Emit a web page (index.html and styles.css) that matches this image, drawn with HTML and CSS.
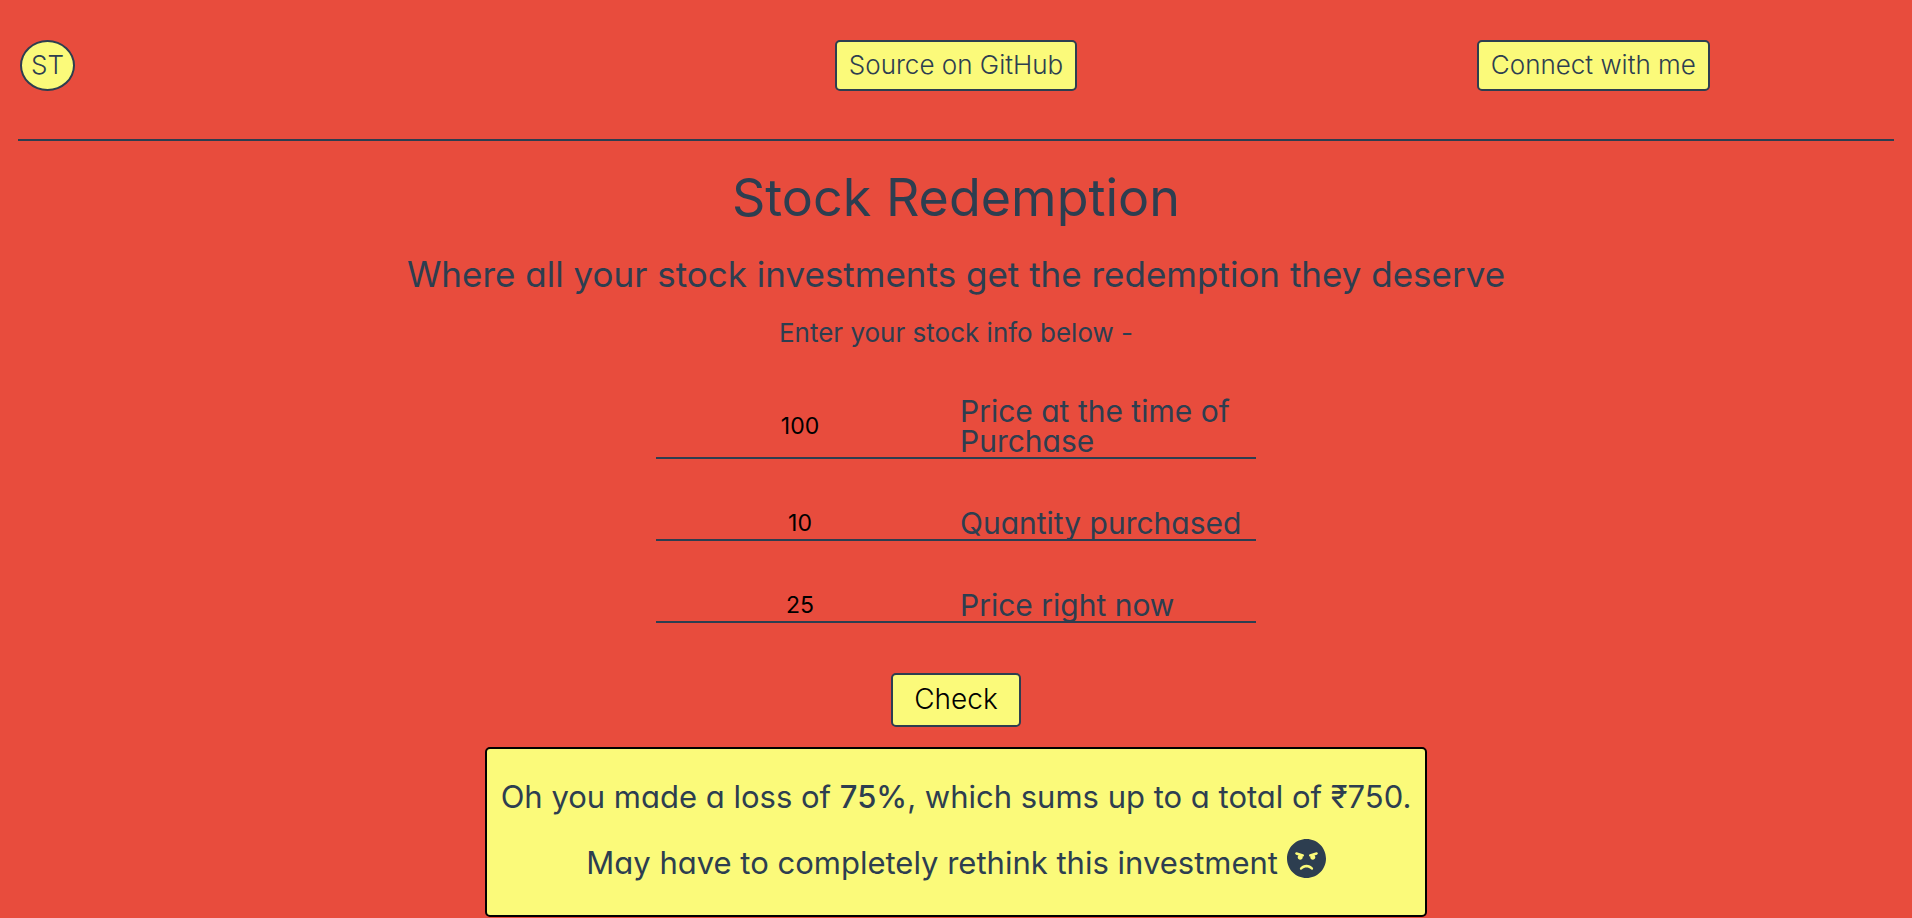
FILE: index.html
```html
<!DOCTYPE html>
<html lang="en">
<head>
  <meta charset="utf-8">
  <meta name="viewport" content="width=device-width, initial-scale=1">
  <title>Stock Redemption</title>
  <link rel="stylesheet" href="styles.css">
</head>
<body>
  <header class="nav">
    <a class="pill logo" href="#">ST</a>
    <a class="pill" href="#">Source on GitHub</a>
    <a class="pill" href="#">Connect with me</a>
  </header>
  <hr class="rule">
  <main class="page">
    <h1 class="title">Stock Redemption</h1>
    <h2 class="tagline">Where all your stock investments get the redemption they deserve</h2>
    <p class="hint">Enter your stock info below -</p>
    <form class="form">
      <div class="field">
        <input class="value" id="buy" type="text" inputmode="numeric" value="100">
        <label for="buy">Price at the time of Purchase</label>
      </div>
      <div class="field">
        <input class="value" id="qty" type="text" inputmode="numeric" value="10">
        <label for="qty">Quantity purchased</label>
      </div>
      <div class="field">
        <input class="value" id="now" type="text" inputmode="numeric" value="25">
        <label for="now">Price right now</label>
      </div>
      <button class="check" type="button">Check</button>
    </form>
    <section class="result">
      <p>Oh you made a loss of <strong>75%</strong>, which sums up to a total of ₹750.</p>
      <p>May have to completely rethink this investment
        <svg class="face" viewBox="0 8 496 496" aria-hidden="true"><path fill="currentColor" d="M248 8C111 8 0 119 0 256s111 248 248 248 248-111 248-248S385 8 248 8zM136 240c0-9.3 4.1-17.5 10.5-23.4l-31-9.3c-8.5-2.5-13.3-11.5-10.7-19.9 2.5-8.5 11.4-13.2 19.9-10.7l80 24c8.5 2.5 13.3 11.5 10.7 19.9-2.1 6.9-8.4 11.4-15.3 11.4-.5 0-1.1-.2-1.7-.2.7 2.7 1.7 5.3 1.7 8.2 0 17.7-14.3 32-32 32S136 257.700 136 240zm168 154.200c-27.800-33.400-84.200-33.400-112.100 0-13.500 16.300-38.200-4.200-24.600-20.500 20-24 49.400-37.700 80.600-37.700s60.600 13.700 80.600 37.700c13.800 16.500-11.100 36.600-24.500 20.500zm76.600-186.900l-31 9.300c6.300 5.800 10.500 14.100 10.500 23.400 0 17.700-14.300 32-32 32s-32-14.300-32-32c0-2.900.9-5.600 1.700-8.200-.6.1-1.100.2-1.700.2-6.900 0-13.200-4.500-15.300-11.400-2.500-8.500 2.300-17.400 10.700-19.900l80-24c8.400-2.500 17.400 2.300 19.900 10.700 2.500 8.500-2.300 17.400-10.800 19.900z"/></svg></p>
    </section>
  </main>
</body>
</html>
```
FILE: styles.css
```css
:root {
  --red: #e84c3d;
  --yellow: #fbfa7a;
  --navy: #2d3e50;
}

* {
  box-sizing: border-box;
}

body {
  margin: 0;
  background: var(--red);
  color: var(--navy);
  font-family: Inter, "Liberation Sans", sans-serif;
  font-feature-settings: "cv11";
}

.nav {
  display: grid;
  grid-template-columns: repeat(3, 1fr);
  justify-items: center;
  padding: 40px 0 48px;
}

.pill {
  padding: 9px 12px 11px;
  border: 2px solid var(--navy);
  border-radius: 5px;
  background: var(--yellow);
  color: var(--navy);
  font-size: 26px;
  font-weight: 300;
  line-height: 27px;
  text-decoration: none;
}

.logo {
  justify-self: start;
  margin-left: 20px;
  padding-inline: 9px;
  border-radius: 50%;
}

.rule {
  height: 2px;
  margin: 0 18px;
  border: 0;
  background: var(--navy);
}

.page {
  display: flex;
  flex-direction: column;
  align-items: center;
  padding: 27px 16px 0;
}

.title,
.tagline,
.hint {
  margin: 0;
  text-align: center;
}

.title {
  font-size: 52px;
  font-weight: 400;
  line-height: 60px;
}

.tagline {
  margin-top: 24px;
  font-size: 35px;
  font-weight: 400;
  line-height: 44px;
}

.hint {
  margin-top: 23px;
  font-size: 26px;
  line-height: 28px;
}

.form {
  display: flex;
  flex-direction: column;
  align-items: center;
  width: 100%;
  max-width: 600px;
}

.field {
  display: grid;
  grid-template-columns: 288px 1fr;
  column-gap: 16px;
  align-items: center;
  width: 100%;
  margin-top: 49px;
  padding-bottom: 1px;
  border-bottom: 2px solid var(--navy);
  font-size: 30px;
  line-height: 30px;
}

.value {
  width: 100%;
  height: 30px;
  padding: 0;
  border: 0;
  outline: 0;
  background: transparent;
  color: #000;
  font: 400 23px/30px Inter, "Liberation Sans", sans-serif;
  text-align: center;
}

.check {
  margin-top: 50px;
  padding: 7px 21px 9px;
  border: 2px solid var(--navy);
  border-radius: 5px;
  background: var(--yellow);
  color: #000;
  font: 300 28px/34px Inter, "Liberation Sans", sans-serif;
}

.result {
  display: flex;
  flex-direction: column;
  gap: 24px;
  margin-top: 20px;
  padding: 30px 14px 34px;
  border: 2px solid #000;
  border-radius: 5px;
  background: var(--yellow);
  font-size: 31px;
  line-height: 36px;
  text-align: center;
}

.result p {
  margin: 0;
}

.result strong {
  font-weight: 500;
}

.face {
  width: 39px;
  height: 39px;
  vertical-align: -4px;
}
```
